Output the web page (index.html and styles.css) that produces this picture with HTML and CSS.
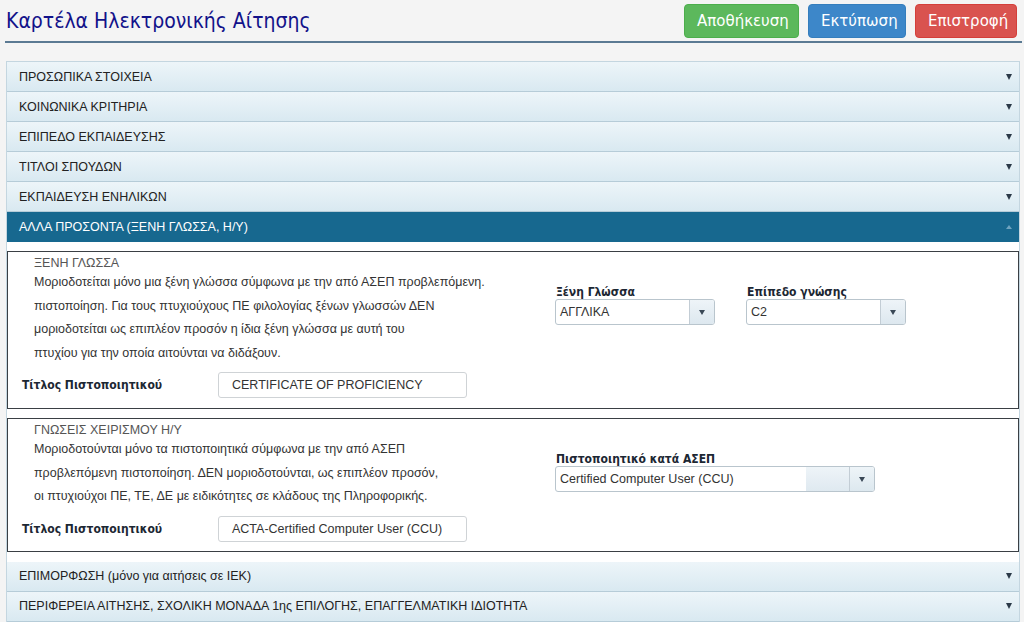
FILE: index.html
```html
<!DOCTYPE html>
<html lang="el">
<head>
<meta charset="utf-8">
<title>Καρτέλα Ηλεκτρονικής Αίτησης</title>
<link rel="stylesheet" href="styles.css">
</head>
<body>
<div class="top">
  <h1 class="title">Καρτέλα Ηλεκτρονικής Αίτησης</h1>
  <div class="actions">
    <button class="btn btn-save">Αποθήκευση</button>
    <button class="btn btn-print">Εκτύπωση</button>
    <button class="btn btn-back">Επιστροφή</button>
  </div>
</div>
<div class="rule"></div>

<div class="accordion">
  <div class="acc-head"><span>ΠΡΟΣΩΠΙΚΑ ΣΤΟΙΧΕΙΑ</span><span class="caret"></span></div>
  <div class="acc-head"><span>ΚΟΙΝΩΝΙΚΑ ΚΡΙΤΗΡΙΑ</span><span class="caret"></span></div>
  <div class="acc-head"><span>ΕΠΙΠΕΔΟ ΕΚΠΑΙΔΕΥΣΗΣ</span><span class="caret"></span></div>
  <div class="acc-head"><span>ΤΙΤΛΟΙ ΣΠΟΥΔΩΝ</span><span class="caret"></span></div>
  <div class="acc-head"><span>ΕΚΠΑΙΔΕΥΣΗ ΕΝΗΛΙΚΩΝ</span><span class="caret"></span></div>
  <div class="acc-head active"><span>ΑΛΛΑ ΠΡΟΣΟΝΤΑ (ΞΕΝΗ ΓΛΩΣΣΑ, Η/Υ)</span><span class="caret up"></span></div>
  <div class="acc-body">
    <div class="group">
      <div class="group-left">
        <div class="group-title">ΞΕΝΗ ΓΛΩΣΣΑ</div>
        <p class="note">Μοριοδοτείται μόνο μια ξένη γλώσσα σύμφωνα με την από ΑΣΕΠ προβλεπόμενη.<br>πιστοποίηση. Για τους πτυχιούχους ΠΕ φιλολογίας ξένων γλωσσών ΔΕΝ<br>μοριοδοτείται ως επιπλέον προσόν η ίδια ξένη γλώσσα με αυτή του<br>πτυχίου για την οποία αιτούνται να διδάξουν.</p>
        <div class="field-row">
          <span class="row-label">Τίτλος Πιστοποιητικού</span>
          <div class="textbox">CERTIFICATE OF PROFICIENCY</div>
        </div>
      </div>
      <div class="group-right">
        <div class="field">
          <div class="flabel">Ξένη Γλώσσα</div>
          <div class="select sel-160"><span class="sel-text">ΑΓΓΛΙΚΑ</span><span class="sel-btn"><span class="caret"></span></span></div>
        </div>
        <div class="field">
          <div class="flabel">Επίπεδο γνώσης</div>
          <div class="select sel-160"><span class="sel-text">C2</span><span class="sel-btn"><span class="caret"></span></span></div>
        </div>
      </div>
    </div>
    <div class="group">
      <div class="group-left">
        <div class="group-title">ΓΝΩΣΕΙΣ ΧΕΙΡΙΣΜΟΥ Η/Υ</div>
        <p class="note">Μοριοδοτούνται μόνο τα πιστοποιητικά σύμφωνα με την από ΑΣΕΠ<br>προβλεπόμενη πιστοποίηση. ΔΕΝ μοριοδοτούνται, ως επιπλέον προσόν,<br>οι πτυχιούχοι ΠΕ, ΤΕ, ΔΕ με ειδικότητες σε κλάδους της Πληροφορικής.</p>
        <div class="field-row">
          <span class="row-label">Τίτλος Πιστοποιητικού</span>
          <div class="textbox">ACTA-Certified Computer User (CCU)</div>
        </div>
      </div>
      <div class="group-right">
        <div class="field">
          <div class="flabel">Πιστοποιητικό κατά ΑΣΕΠ</div>
          <div class="select sel-320"><span class="sel-text">Certified Computer User (CCU)</span><span class="sel-clear"></span><span class="sel-btn"><span class="caret"></span></span></div>
        </div>
      </div>
    </div>
  </div>
  <div class="acc-head"><span>ΕΠΙΜΟΡΦΩΣΗ (μόνο για αιτήσεις σε ΙΕΚ)</span><span class="caret"></span></div>
  <div class="acc-head"><span>ΠΕΡΙΦΕΡΕΙΑ ΑΙΤΗΣΗΣ, ΣΧΟΛΙΚΗ ΜΟΝΑΔΑ 1ης ΕΠΙΛΟΓΗΣ, ΕΠΑΓΓΕΛΜΑΤΙΚΗ ΙΔΙΟΤΗΤΑ</span><span class="caret"></span></div>
</div>
</body>
</html>
```

FILE: styles.css
```css
* { box-sizing: border-box; }
html, body { margin: 0; padding: 0; }
body {
  background: #f4f4f4;
  font-family: "Liberation Sans", Arial, sans-serif;
  font-size: 12.5px;
  color: #333;
  height: 622px;
  overflow: hidden;
}

.top {
  display: flex;
  justify-content: space-between;
  align-items: center;
  height: 41px;
  padding: 4px 7px 3px 6px;
}
.title {
  margin: 0;
  font-family: "DejaVu Sans Condensed", "DejaVu Sans", sans-serif;
  font-stretch: condensed;
  font-weight: normal;
  font-size: 21px;
  color: #12128a;
  line-height: 30px;
}
.actions { display: flex; gap: 9px; height: 34px; }
.btn {
  height: 34px;
  border: 1px solid transparent;
  border-radius: 4px;
  color: #fff;
  font-family: "DejaVu Sans", sans-serif;
  font-size: 15px;
  padding: 0 12px;
  cursor: pointer;
}
.btn-save { background: #5cb85c; border-color: #4cae4c; width: 115px; }
.btn-print { background: #3d87c9; border-color: #357ebd; width: 98px; }
.btn-back { background: #d9534f; border-color: #d43f3a; width: 102px; }

.rule {
  margin: 0 2px 0 5px;
  border-top: 2px solid #5b7a93;
}

.accordion {
  margin: 18px 4px 0 6px;
  border: 1px solid #c4d6e0;
  border-bottom: none;
  background: #fff;
}
.acc-head {
  height: 30px;
  display: flex;
  align-items: center;
  justify-content: space-between;
  padding: 0 7px 0 12px;
  background: linear-gradient(#edf5f9, #d9e9f1);
  border-bottom: 1px solid #b6ccd8;
  font-size: 12.5px;
  color: #222;
  white-space: nowrap;
}
.acc-head.active {
  background: #17688f;
  border-bottom-color: #17688f;
  color: #fff;
}
.caret {
  width: 0;
  height: 0;
  border-left: 3.5px solid transparent;
  border-right: 3.5px solid transparent;
  border-top: 6px solid #2b3a48;
}
.caret.up {
  border-top: none;
  border-bottom: 4px solid #6fa4c0;
}

.acc-body {
  padding: 9px 0 10px;
  background: #fff;
}
.group {
  display: flex;
  border: 1px solid #3a3f44;
  padding: 3px 0 10px;
}
.group + .group { margin-top: 9px; padding-bottom: 9px; }
.group-left {
  flex: none;
  width: 547px;
}
.group-title {
  margin-left: 26px;
  font-size: 12.5px;
  line-height: 16px;
  color: #555;
}
.note {
  margin: 0 0 7px 26px;
  line-height: 23.5px;
  font-size: 12.5px;
  color: #333;
  white-space: nowrap;
}
.field-row {
  display: flex;
  align-items: center;
  padding-left: 14px;
}
.row-label {
  width: 196px;
  font-family: "DejaVu Sans Condensed", "DejaVu Sans", sans-serif;
  font-stretch: condensed;
  font-weight: bold;
  font-size: 12px;
  color: #1c2733;
}
.textbox {
  width: 249px;
  height: 26px;
  border: 1px solid #cfd3d6;
  border-radius: 3px;
  background: #fff;
  padding: 0 13px;
  line-height: 24px;
  font-size: 12.5px;
  color: #333;
}

.group-right {
  display: flex;
  gap: 31px;
  padding-top: 30px;
}
.flabel {
  padding-left: 1px;
  font-family: "DejaVu Sans Condensed", "DejaVu Sans", sans-serif;
  font-stretch: condensed;
  font-weight: bold;
  font-size: 12px;
  line-height: 14px;
  color: #1c2733;
}
.select {
  display: flex;
  height: 26px;
  border: 1px solid #b9c5cd;
  border-radius: 3px;
  background: #fff;
  overflow: hidden;
}
.sel-160 { width: 160px; }
.sel-320 { width: 320px; }
.sel-text {
  flex: 1;
  padding-left: 4px;
  line-height: 24px;
  font-size: 12.5px;
  color: #333;
  white-space: nowrap;
}
.sel-clear {
  width: 43px;
  background: linear-gradient(#eef4f8, #dfe9f0);
}
.sel-btn {
  width: 25px;
  display: flex;
  align-items: center;
  justify-content: center;
  border-left: 1px solid #c3cdd5;
  background: linear-gradient(#eef4f8, #dde8ef);
}
.sel-btn .caret {
  border-left-width: 3px;
  border-right-width: 3px;
  border-top-width: 5px;
  border-top-color: #3a4856;
}
```
